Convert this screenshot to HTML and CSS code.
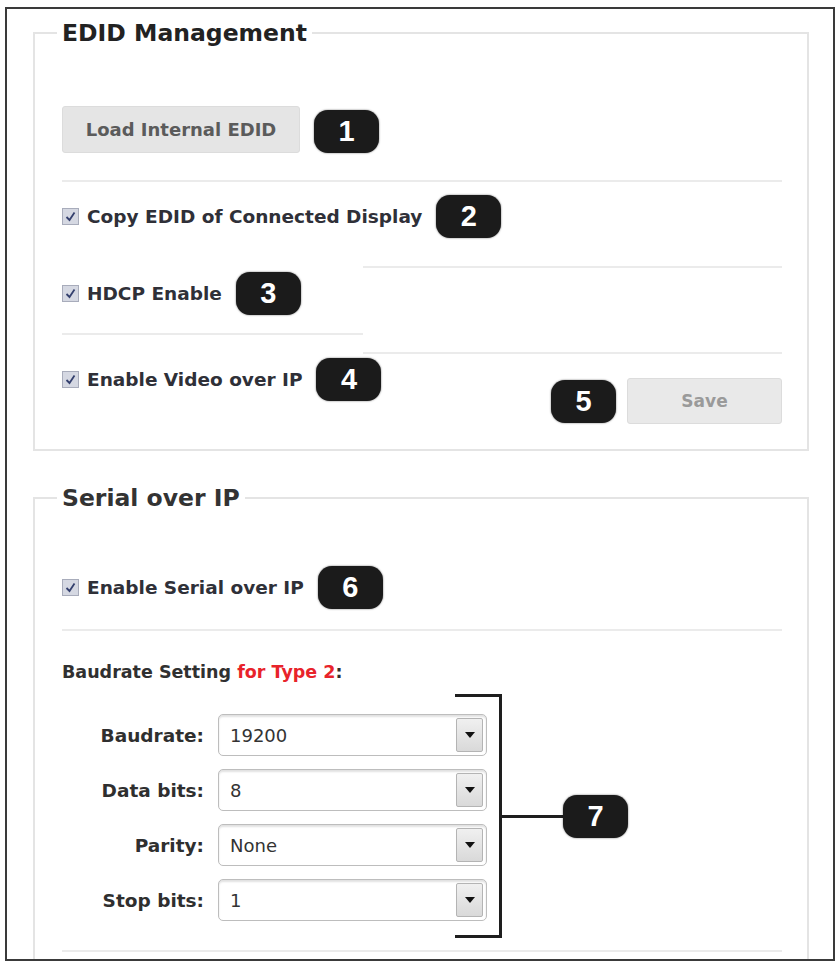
FILE: index.html
```html
<!DOCTYPE html>
<html lang="en">
<head>
    <meta charset="UTF-8">
    <title>EDID Management</title>
    <link rel="stylesheet" href="styles.css">
</head>
<body>

<div class="frame">

    <fieldset class="panel">
        <legend>EDID Management</legend>

        <div class="row first">
            <div class="btn load">Load Internal EDID</div>
            <span class="badge low">1</span>
        </div>
        <div class="sep"></div>

        <div class="row copy">
            <label class="check">
                <svg class="box" width="17" height="17" viewBox="0 0 17 17"><rect x="0.5" y="0.5" width="16" height="16" fill="#d5d8e2" stroke="#a8acbb"/><path d="M4.5 9 L7.5 12 L12.5 4.5" fill="none" stroke="#34406e" stroke-width="1.8"/></svg>
                Copy EDID of Connected Display
            </label>
            <span class="badge">2</span>
        </div>
        <div class="sep right"></div>

        <div class="row hdcp">
            <label class="check">
                <svg class="box" width="17" height="17" viewBox="0 0 17 17"><rect x="0.5" y="0.5" width="16" height="16" fill="#d5d8e2" stroke="#a8acbb"/><path d="M4.5 9 L7.5 12 L12.5 4.5" fill="none" stroke="#34406e" stroke-width="1.8"/></svg>
                HDCP Enable
            </label>
            <span class="badge">3</span>
        </div>
        <div class="sep-split">
            <div class="half-left"></div>
            <div class="half-right"></div>
        </div>

        <div class="row-save">
            <div class="row">
                <label class="check">
                    <svg class="box" width="17" height="17" viewBox="0 0 17 17"><rect x="0.5" y="0.5" width="16" height="16" fill="#d5d8e2" stroke="#a8acbb"/><path d="M4.5 9 L7.5 12 L12.5 4.5" fill="none" stroke="#34406e" stroke-width="1.8"/></svg>
                    Enable Video over IP
                </label>
                <span class="badge">4</span>
            </div>
            <div class="row save-group">
                <span class="badge">5</span>
                <div class="btn save">Save</div>
            </div>
        </div>
    </fieldset>

    <fieldset class="panel serial">
        <legend>Serial over IP</legend>

        <div class="row first-serial">
            <label class="check">
                <svg class="box" width="17" height="17" viewBox="0 0 17 17"><rect x="0.5" y="0.5" width="16" height="16" fill="#d5d8e2" stroke="#a8acbb"/><path d="M4.5 9 L7.5 12 L12.5 4.5" fill="none" stroke="#34406e" stroke-width="1.8"/></svg>
                Enable Serial over IP
            </label>
            <span class="badge">6</span>
        </div>
        <div class="sep serial-sep"></div>

        <p class="caption">Baudrate Setting <span class="red">for Type 2</span>:</p>

        <div class="baud">
            <div class="fields">
                <span class="lbl">Baudrate:</span>
                <div class="select"><span>19200</span><span class="arrow"></span></div>
                <span class="lbl">Data bits:</span>
                <div class="select"><span>8</span><span class="arrow"></span></div>
                <span class="lbl">Parity:</span>
                <div class="select"><span>None</span><span class="arrow"></span></div>
                <span class="lbl">Stop bits:</span>
                <div class="select"><span>1</span><span class="arrow"></span></div>
            </div>
            <div class="bracket"></div>
            <div class="connector"></div>
            <span class="badge">7</span>
        </div>
        <div class="sep bottom-sep"></div>
    </fieldset>

</div>

</body>
</html>
```

FILE: styles.css
```css
body {
    margin: 0;
    background: #fff;
    font-family: "DejaVu Sans", Verdana, sans-serif;
    color: #2e2e2e;
}
.frame {
    box-sizing: border-box;
    height: 954px;
    margin: 7px 2px 0 5px;
    border: 2px solid #3a3a3a;
    overflow: hidden;
    padding-top: 10px;
}
.panel {
    margin: 0 24px 0 26px;
    padding: 0 25px 25px 27px;
    border: 2px solid #e4e4e4;
}
.panel legend {
    margin-left: -5px;
    padding: 0 5px;
    font-size: 23.5px;
    line-height: 28px;
    font-weight: bold;
    color: #222;
}
.serial {
    margin-top: 33px;
}
.serial legend {
    color: #333;
}
.row {
    display: flex;
    align-items: center;
}
.check {
    display: flex;
    align-items: center;
    font-size: 18.5px;
    font-weight: bold;
    color: #2f3038;
    white-space: nowrap;
}
.box {
    margin-right: 8px;
    flex: none;
}
.badge {
    display: inline-flex;
    align-items: center;
    justify-content: center;
    width: 65px;
    height: 43px;
    margin-left: 14px;
    border-radius: 14px;
    background: #1b1b1b;
    box-shadow: 0 0 2px rgba(0, 0, 0, 0.6);
    color: #fff;
    font-family: "Liberation Sans", Arial, sans-serif;
    font-weight: bold;
    font-size: 29px;
    flex: none;
}
.badge.low {
    margin-top: 5px;
}
.btn {
    display: flex;
    align-items: center;
    justify-content: center;
    background: #e5e5e5;
    border: 1px solid #dcdcdc;
    border-radius: 3px;
    font-weight: bold;
}
.load {
    width: 236px;
    height: 45px;
    font-size: 18px;
    color: #5b5b5b;
}
.first {
    margin-top: 58px;
}
.sep {
    border-top: 2px solid #ebebeb;
}
.first + .sep {
    margin-top: 27px;
}
.copy {
    margin-top: 13px;
}
.sep.right {
    margin: 28px 0 0 301px;
}
.hdcp {
    margin-top: 4px;
}
.sep-split {
    display: flex;
    height: 21px;
    margin-top: 18px;
}
.half-left {
    width: 301px;
    border-top: 2px solid #ebebeb;
}
.half-right {
    flex: 1;
    border-bottom: 2px solid #ebebeb;
}
.row-save {
    display: flex;
    justify-content: space-between;
    align-items: flex-start;
    margin-top: 4px;
}
.save-group {
    margin-top: 20px;
}
.save {
    width: 153px;
    height: 44px;
    margin-left: 11px;
    font-size: 17px;
    color: #9a9a9a;
    background: #e9e9e9;
}
.first-serial {
    margin-top: 54px;
}
.serial-sep {
    margin-top: 20px;
}
.caption {
    margin: 30px 0 0;
    font-size: 17.5px;
    line-height: 22px;
    font-weight: bold;
    color: #303030;
}
.red {
    color: #e8232b;
}
.baud {
    display: flex;
    align-items: center;
    margin-top: 11px;
}
.fields {
    display: grid;
    grid-template-columns: 142px 269px;
    column-gap: 14px;
    row-gap: 13px;
    align-items: center;
    padding: 20px 0 17px;
}
.lbl {
    text-align: right;
    font-size: 18.5px;
    font-weight: bold;
    color: #2f2f2f;
}
.select {
    box-sizing: border-box;
    height: 42px;
    display: flex;
    align-items: center;
    justify-content: space-between;
    padding: 0 3px 0 11px;
    border: 1px solid #bdbdbd;
    border-radius: 5px;
    box-shadow: inset 0 2px 2px rgba(0, 0, 0, 0.12);
    font-size: 18px;
    color: #333;
}
.arrow {
    box-sizing: border-box;
    width: 27px;
    height: 34px;
    display: flex;
    align-items: center;
    justify-content: center;
    border: 1px solid #b4b4b4;
    border-radius: 2px;
    background: linear-gradient(#f0f0f0, #d9d9d9);
}
.arrow::after {
    content: "";
    border-left: 5px solid transparent;
    border-right: 5px solid transparent;
    border-top: 6px solid #111;
}
.bracket {
    box-sizing: border-box;
    align-self: stretch;
    width: 47px;
    margin-left: -32px;
    border: 3px solid #1e1e1e;
    border-left: none;
}
.connector {
    width: 61px;
    height: 3px;
    background: #1e1e1e;
}
.baud .badge {
    margin-left: 0;
}
.bottom-sep {
    margin-top: 12px;
}
```
